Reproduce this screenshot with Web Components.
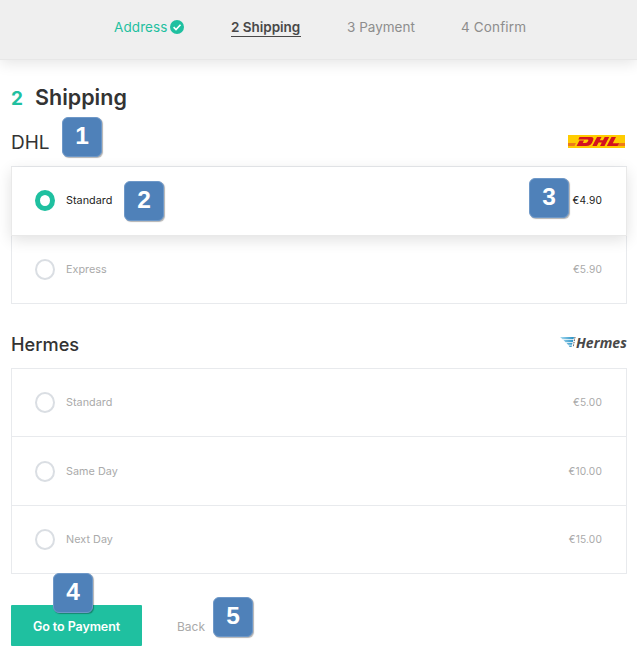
<!DOCTYPE html>
<html lang="en">
<head>
<meta charset="utf-8">
<title>Shipping</title>
<style>
body{margin:0;background:#fff;font-family:Inter,"Liberation Sans",sans-serif;color:#333}
</style>
</head>
<body>
<checkout-page></checkout-page>
<script>
const define = (name, html, after) => {
  const t = document.createElement('template');
  t.innerHTML = html;
  customElements.define(name, class extends HTMLElement {
    constructor() {
      super();
      this.attachShadow({mode: 'open'}).append(t.content.cloneNode(true));
    }
    connectedCallback() { if (after) after(this, this.shadowRoot); }
  });
};

define('check-icon', `
<style>:host{display:block;width:14px;height:14px}svg{display:block}</style>
<svg width="14" height="14" viewBox="0 0 14 14"><circle cx="7" cy="7" r="7" fill="#1fc0a0"/><path d="M3.600 7.200 6 9.500l4.500-4.800" fill="none" stroke="#fff" stroke-width="1.600"/></svg>`);

define('step-item', `
<style>
:host{display:flex;align-items:center;gap:3px;height:18px;font-size:13.500px;line-height:18px;color:#8d8d8d;white-space:nowrap;box-sizing:border-box}
:host([done]){color:#1fc0a0}
:host([current]){color:#484848;font-weight:600;height:19px;border-bottom:1px solid #484848}
</style><slot></slot>`);

define('step-bar', `
<style>
:host{display:flex;box-sizing:border-box;height:60px;padding:18px 0 0 114px;background:#efefef;border-bottom:1px solid #e7e7e7;box-shadow:0 3px 14px rgba(0,0,0,.11)}
step-item{flex:none}
</style>
<step-item done style="width:70px;margin-right:47px;letter-spacing:.1px"><span style="width:53px">Address</span><check-icon></check-icon></step-item>
<step-item current style="width:70px;margin-right:46px;letter-spacing:-.02px">2 Shipping</step-item>
<step-item style="width:68px;margin-right:46px">3 Payment</step-item>
<step-item style="width:65px;letter-spacing:.15px">4 Confirm</step-item>`);

define('dhl-logo', `
<style>:host{display:block;width:57px;height:13px}svg{display:block}</style>
<svg width="57" height="13" viewBox="0 0 57 13">
<path d="M0 0h57v13H0z" fill="#fc0"/>
<path d="M0 8h8l-1.500 3H0zM50 8h7v3H48.500z" fill="#ee7a18"/>
<g fill="#d4121f"><path d="M11.500 2H23q3.500 0 2 3.500Q23.500 11 18 11H8.500l3-5.500H16L14.800 8h2.500q2 0 3-2.200.5-1.300-1-1.300h-9z"/>
<path d="M29 2h4.500l-1.700 3.300H35L36.700 2h4.500l-4.700 9H32l1.800-3.400h-3.200L28.800 11h-4.500z"/>
<path d="M43.500 2H48l-3.200 6.300H51L49.500 11h-10.700z"/></g></svg>`);

define('hermes-logo', `
<style>:host{display:flex;align-items:center;width:67px;height:15px;color:#484848}svg{display:block;flex:none;margin-top:1px}
span{font:italic 700 14px/15px "Open Sans",sans-serif;letter-spacing:.05px;white-space:nowrap}</style>
<svg width="16" height="15" viewBox="0 0 16 15"><defs><linearGradient id="g"><stop stop-color="#a9dcf1"/><stop offset="1" stop-color="#278fc3"/></linearGradient></defs>
<path d="M0 2h14l-.5 2.300H2.500zM3.500 5H13.300l-.5 2.200H5.500zM6.500 8H12.500l-.5 1.700H8zM8.500 10.500h3.500l-.4 1.500h-2z" fill="url(#g)"/><path d="m15 2-1.800 10" fill="none" stroke="#555" stroke-dasharray="1.500 1"/></svg><span>Hermes</span>`);

define('radio-mark', `
<style>:host{display:block;box-sizing:border-box;width:20px;height:21px;border:2px solid #dadee3;border-radius:50%;background:#fff}
:host([checked]){border:5px solid #1fc0a0}</style>`);

define('ship-option', `
<style>
:host{display:flex;align-items:center;box-sizing:border-box;height:68px;padding:0 24px 0 23px;border:solid #e8eaed;border-width:0 1px 1px;font-size:10.800px;line-height:17px;color:#aaa;background:#fff}
:host([tall]){height:69px}
:host([selected]){position:relative;z-index:1;padding-bottom:1px;color:#222;box-shadow:0 4px 14px rgba(0,0,0,.12);border-color:#e9e9e9}
.name{margin-left:11px;flex:1;letter-spacing:.04px}
.price{font-size:10.200px;line-height:15px;letter-spacing:.15px}
</style>
<radio-mark></radio-mark><span class="name"><slot></slot></span><span class="price"></span>`, (el, r) => {
  r.querySelector('.price').textContent = el.getAttribute('price');
  r.querySelector('radio-mark').toggleAttribute('checked', el.hasAttribute('selected'));
});

define('carrier-group', `
<style>
:host{display:block}
header{display:flex;justify-content:space-between;align-items:center;height:28px;font-size:19px;line-height:28px;color:#333}
.list{margin-top:10px;border-top:1px solid #e8eaed}
</style>
<header><slot name="name"></slot><slot name="logo"></slot></header><div class="list"><slot></slot></div>`);

define('page-title', `
<style>:host{display:flex;align-items:baseline;height:30px;font-size:21.500px;line-height:30px;font-weight:600;color:#333}
b{width:24px;color:#1fc0a0;font-size:19px;font-weight:700}</style><b>2</b><slot></slot>`);

define('action-row', `
<style>
:host{display:flex;align-items:center;height:41px;font-size:12px;color:#aaa}
button{width:131px;height:41px;padding:2px 0 0;border:0;border-radius:1px;background:#1fc0a0;color:#fff;font:600 12.500px Inter,sans-serif;letter-spacing:-.08px;margin-right:35px}
span{padding-top:2px}
</style>
<button>Go to Payment</button><span>Back</span>`);

define('note-badge', `
<style>:host{position:absolute;z-index:3;box-sizing:border-box;width:40px;height:40px;border:1px solid #6e98c8;border-radius:6px;background:#4f81b9;color:#fff;box-shadow:1px 1px 1px rgba(0,0,0,.3);font:700 24.500px/36px "Liberation Sans",Arial,sans-serif;text-align:center}</style><slot></slot>`);

define('checkout-page', `
<style>
:host{display:block;position:relative;width:637px;height:660px;overflow:hidden}
main{padding:22px 10px 0 11px}
carrier-group.first{margin-top:16px}
carrier-group.second{margin-top:26px}
action-row{margin-top:31px}
</style>
<step-bar></step-bar>
<main>
<page-title>Shipping</page-title>
<carrier-group class="first"><span slot="name" style="padding-top:2px">DHL</span><dhl-logo slot="logo" style="margin:0 2px 1px 0"></dhl-logo>
<ship-option tall selected price="€4.90">Standard</ship-option><ship-option price="€5.90">Express</ship-option></carrier-group>
<carrier-group class="second"><span slot="name" style="font-weight:500;font-size:18.200px;padding-bottom:1px">Hermes</span><hermes-logo slot="logo" style="margin-bottom:4px"></hermes-logo>
<ship-option price="€5.00">Standard</ship-option><ship-option tall price="€10.00">Same Day</ship-option><ship-option price="€15.00">Next Day</ship-option></carrier-group>
<action-row></action-row>
</main>
<note-badge style="left:62px;top:117px">1</note-badge>
<note-badge style="left:124px;top:181px">2</note-badge>
<note-badge style="left:529px;top:178px">3</note-badge>
<note-badge style="left:53px;top:573px">4</note-badge>
<note-badge style="left:213px;top:597px">5</note-badge>`);
</script>
</body>
</html>
